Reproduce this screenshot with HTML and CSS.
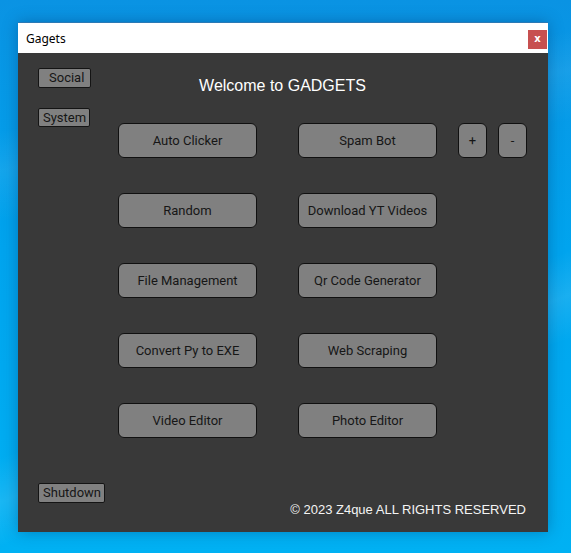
FILE: index.html
```html
<!DOCTYPE html>
<html>
<head>
<meta charset="utf-8">
<title>Gagets</title>
<link rel="stylesheet" href="styles.css">
</head>
<body>
<div class="window">
  <div class="titlebar">
    <span class="title">Gagets</span>
    <span class="close">x</span>
  </div>
  <div class="content">
    <div class="side">
      <button class="small social">Social</button>
      <button class="small system">System</button>
      <button class="small shutdown">Shutdown</button>
    </div>
    <div class="main">
      <h1 class="welcome">Welcome to GADGETS</h1>
      <div class="grid">
        <div class="row">
          <button class="big">Auto Clicker</button>
          <button class="big">Spam Bot</button>
          <button class="sq">+</button>
          <button class="sq">-</button>
        </div>
        <div class="row">
          <button class="big">Random</button>
          <button class="big">Download YT Videos</button>
        </div>
        <div class="row">
          <button class="big">File Management</button>
          <button class="big">Qr Code Generator</button>
        </div>
        <div class="row">
          <button class="big">Convert Py to EXE</button>
          <button class="big">Web Scraping</button>
        </div>
        <div class="row">
          <button class="big">Video Editor</button>
          <button class="big">Photo Editor</button>
        </div>
      </div>
      <div class="footer">© 2023 Z4que ALL RIGHTS RESERVED</div>
    </div>
  </div>
</div>
</body>
</html>
```
FILE: styles.css
```css
html, body {
  margin: 0;
  padding: 0;
}
body {
  width: 571px;
  height: 553px;
  overflow: hidden;
  background:
    linear-gradient(160deg, rgba(255,255,255,0) 60%, rgba(255,255,255,0.10) 66%, rgba(255,255,255,0) 72%),
    linear-gradient(170deg, rgba(255,255,255,0) 20%, rgba(255,255,255,0.07) 26%, rgba(255,255,255,0) 34%),
    linear-gradient(180deg, #0a93e3 0%, #00a4ee 45%, #00b1f3 100%);
  font-family: Roboto, "Liberation Sans", sans-serif;
  display: flex;
  align-items: flex-start;
}
.window {
  margin: 22px 0 0 18px;
  width: 530px;
  height: 510px;
  display: flex;
  flex-direction: column;
  box-shadow: 0 0 14px rgba(0, 40, 90, 0.35);
}
.titlebar {
  height: 30px;
  border-top: 1px solid #2b79b5;
  background: #ffffff;
  display: flex;
  align-items: center;
  justify-content: space-between;
  padding-left: 8px;
}
.title {
  font-family: "Noto Sans", "Open Sans", sans-serif;
  font-size: 12px;
  color: #000;
}
.close {
  align-self: flex-start;
  margin-top: 7px;
  margin-right: 1px;
  width: 19px;
  height: 19px;
  background: #c75050;
  color: #fff;
  font-family: "DejaVu Sans", sans-serif;
  font-weight: bold;
  font-size: 10px;
  line-height: 18px;
  text-align: center;
}
.content {
  flex: 1;
  background: #393939;
  display: flex;
  padding: 15px 21px 0 20px;
}
.side {
  width: 80px;
  display: flex;
  flex-direction: column;
  align-items: flex-start;
  padding-bottom: 29px;
}
button {
  font-family: Roboto, "Liberation Sans", sans-serif;
  font-size: 13px;
  color: #161616;
  background: #808080;
  margin: 0;
  cursor: pointer;
}
.small {
  height: 20px;
  line-height: 18px;
  padding: 0 3px 0 4px;
  border: 1px solid #141414;
  border-radius: 2px;
}
.social {
  padding: 0 6px 0 10px;
}
.system {
  margin-top: 20px;
  height: 19px;
  line-height: 17px;
}
.shutdown {
  margin-top: auto;
}
.main {
  flex: 1;
  display: flex;
  flex-direction: column;
}
.welcome {
  margin: 8px 0 0 -80px;
  font-family: "Liberation Sans", Arial, sans-serif;
  font-weight: normal;
  font-size: 16px;
  line-height: 20px;
  color: #ffffff;
  text-align: center;
}
.grid {
  margin-top: 27px;
  display: flex;
  flex-direction: column;
  gap: 35px;
}
.row {
  display: flex;
}
.big {
  width: 139px;
  height: 35px;
  padding: 0;
  border: 1px solid #101010;
  border-radius: 6px;
}
.big + .big {
  margin-left: 41px;
}
.sq {
  width: 29px;
  height: 35px;
  padding: 0;
  border: 1px solid #101010;
  border-radius: 6px;
  margin-left: 21px;
}
.sq + .sq {
  margin-left: 11px;
}
.footer {
  margin-top: auto;
  padding: 0 1px 14px 0;
  text-align: right;
  font-family: "Liberation Sans", Arial, sans-serif;
  font-size: 13px;
  line-height: 16px;
  color: #f4f4f4;
}
```
